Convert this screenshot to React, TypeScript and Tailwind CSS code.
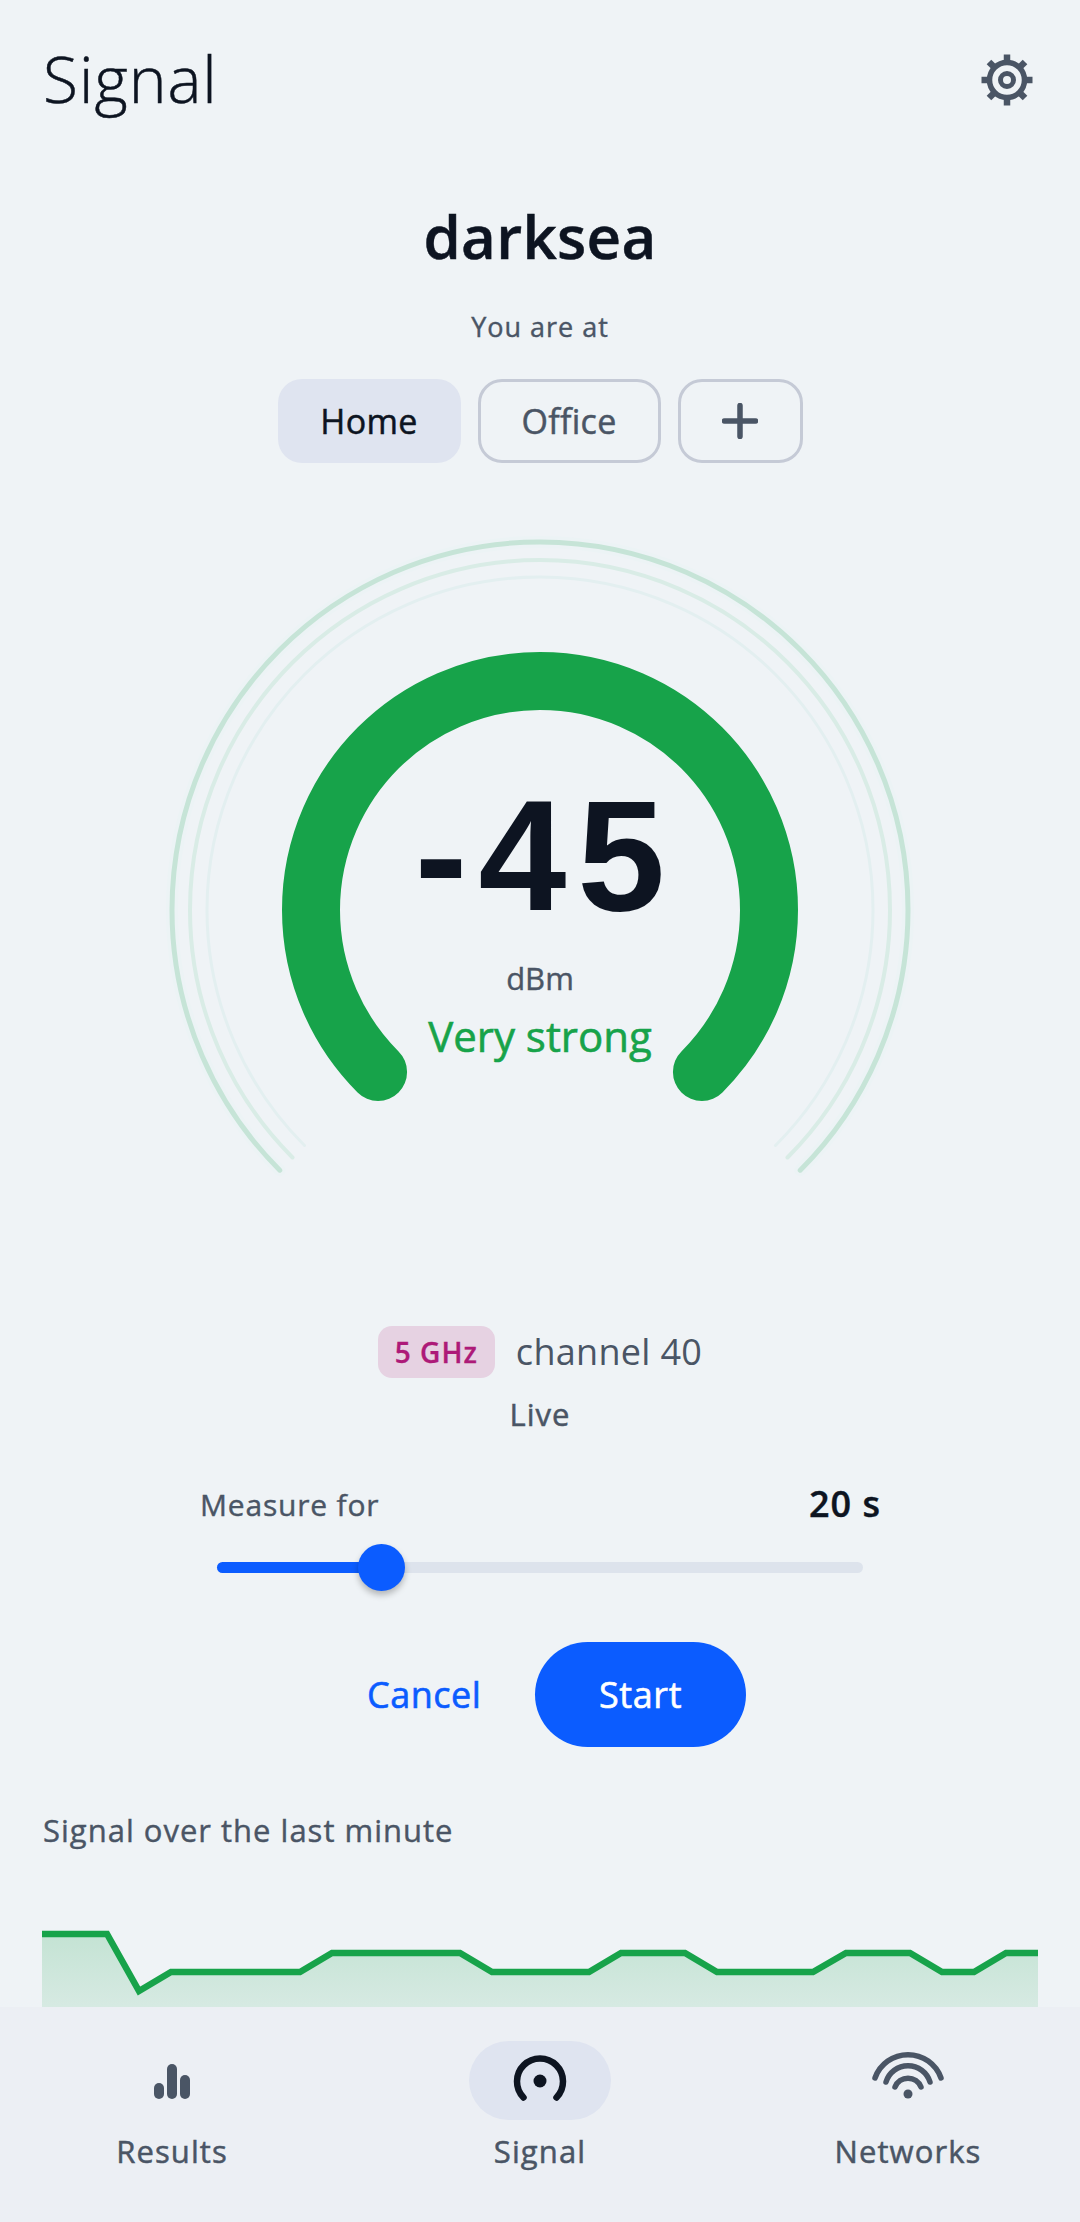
import React from "react";

const font = { fontFamily: '"Open Sans", "Noto Sans", sans-serif' };

function arc(cx: number, cy: number, r: number) {
  const d = r * Math.SQRT1_2;
  return `M ${cx - d} ${cy + d} A ${r} ${r} 0 1 1 ${cx + d} ${cy + d}`;
}

function Gear() {
  const teeth = [0, 45, 90, 135, 180, 225, 270, 315];
  return (
    <svg width="52" height="52" viewBox="0 0 52 52" fill="none" stroke="#4a5565">
      <circle cx="26" cy="26" r="17.5" strokeWidth="5.5" />
      <circle cx="26" cy="26" r="6.5" strokeWidth="5" />
      {teeth.map((a) => (
        <line key={a} x1="26" y1="7" x2="26" y2="0.5" strokeWidth="6.5" transform={`rotate(${a} 26 26)`} />
      ))}
    </svg>
  );
}

function Gauge() {
  const c = 400;
  return (
    <svg width="800" height="700" viewBox="0 0 800 700" fill="none" strokeLinecap="round" className="absolute top-0 left-[140px]">
      <path d={arc(c, 390, 368)} stroke="#ecf3f5" strokeWidth="12" />
      <path d={arc(c, 390, 368)} stroke="#c6e4d7" strokeWidth="5" />
      <path d={arc(c, 390, 350)} stroke="#d9ece6" strokeWidth="4" />
      <path d={arc(c, 390, 333)} stroke="#e3eff0" strokeWidth="3" />
      <path d={arc(c, 390, 229)} stroke="#17a34a" strokeWidth="58" />
    </svg>
  );
}

function Chart() {
  const pts = "42,1934 107,1934 139,1991 171,1972 300,1972 332,1953 460,1953 492,1972 589,1972 621,1953 685,1953 717,1972 813,1972 846,1953 910,1953 942,1972 974,1972 1006,1953 1038,1953";
  return (
    <svg width="1080" height="140" viewBox="0 1900 1080 140" fill="none" className="block">
      <defs>
        <linearGradient id="fill" x1="0" y1="1934" x2="0" y2="2010" gradientUnits="userSpaceOnUse">
          <stop offset="0" stopColor="#17a34a" stopOpacity="0.2" />
          <stop offset="1" stopColor="#17a34a" stopOpacity="0.11" />
        </linearGradient>
      </defs>
      <polygon points={`${pts} 1038,2040 42,2040`} fill="url(#fill)" />
      <polyline points={pts} stroke="#17a34a" strokeWidth="6.5" strokeLinejoin="miter" />
    </svg>
  );
}

function NavItem({ label, active, children }: { label: string; active?: boolean; children: React.ReactNode }) {
  return (
    <div className="flex flex-col items-center">
      <div className={`w-[142px] h-[79px] rounded-full flex items-center justify-center ${active ? "bg-[#dfe4f0]" : ""}`}>{children}</div>
      <div className="mt-[13px] h-[36px] leading-[36px] text-[31px] tracking-[1.1px] [-webkit-text-stroke:0.5px] text-[#4a5565]">{label}</div>
    </div>
  );
}

export default function App() {
  return (
    <div style={font} className="w-[1080px] h-[2222px] bg-[#eff3f6] flex flex-col overflow-hidden">
      <main className="flex-1 min-h-0 overflow-hidden flex flex-col">
        <header className="h-[160px] shrink-0 flex items-center justify-between pl-[43px] pr-[47px]">
          <h1 className="text-[64px] leading-[78px] mb-[2px] font-light text-[#0d1421] tracking-[1px] [-webkit-text-stroke:0.5px]">Signal</h1>
          <Gear />
        </header>

        <div className="mt-[36px] h-[80px] leading-[80px] text-center text-[60px] font-semibold tracking-[0.3px] [-webkit-text-stroke:0.5px] text-[#0d1421]">darksea</div>
        <div className="mt-[31px] h-[40px] leading-[40px] text-center text-[27px] tracking-[1px] [-webkit-text-stroke:0.4px] text-[#4a5565]">You are at</div>

        <div className="mt-[32px] flex justify-center gap-[17px]">
          <div className="w-[183px] h-[84px] rounded-[24px] bg-[#dfe4f0] flex items-center justify-center text-[34px] tracking-[0.3px] [-webkit-text-stroke:0.5px] text-[#0d1421]">Home</div>
          <div className="w-[183px] h-[84px] rounded-[24px] border-[3px] border-[#c5cad6] flex items-center justify-center text-[34px] tracking-[0.3px] [-webkit-text-stroke:0.5px] text-[#4a5565]">Office</div>
          <div className="w-[125px] h-[84px] rounded-[24px] border-[3px] border-[#c5cad6] flex items-center justify-center">
            <svg width="36" height="36" viewBox="0 0 36 36" stroke="#4a5565" strokeWidth="5.5" strokeLinecap="round">
              <path d="M18 2.5V33.5M2.5 18H33.5" />
            </svg>
          </div>
        </div>

        <div className="mt-[57px] relative h-[700px] shrink-0 flex flex-col items-center">
          <Gauge />
          <div className="relative mt-[250px] pl-[11px] h-[170px] leading-[170px] text-[158px] font-bold tracking-[11px] text-[#0d1421]" style={{ fontFamily: '"Liberation Sans", sans-serif' }}>-45</div>
          <div className="relative mt-[18px] h-[40px] leading-[40px] text-[31px] [-webkit-text-stroke:0.4px] text-[#4a5565]">dBm</div>
          <div className="relative mt-[10px] h-[56px] leading-[56px] text-[42px] [-webkit-text-stroke:0.6px] text-[#17a34a]">Very strong</div>
        </div>

        <div className="mt-[106px] flex justify-center items-center gap-[21px] h-[52px] shrink-0">
          <div className="w-[117px] h-[52px] rounded-[14px] bg-[#e6d2e2] flex items-center justify-center text-[28px] font-semibold tracking-[1px] [-webkit-text-stroke:0.3px] text-[#ad1a78]">5 GHz</div>
          <div className="text-[36px] tracking-[0.3px] text-[#4a5565]">channel 40</div>
        </div>
        <div className="mt-[16px] h-[40px] leading-[40px] text-center text-[31px] tracking-[1px] [-webkit-text-stroke:0.5px] text-[#4a5565]">Live</div>

        <div className="mt-[48px] pl-[200px] pr-[199px] h-[44px] flex items-center justify-between shrink-0">
          <span className="text-[30px] tracking-[0.8px] [-webkit-text-stroke:0.4px] text-[#4a5565]">Measure for</span>
          <span className="text-[36px] font-semibold tracking-[1px] [-webkit-text-stroke:0.4px] text-[#0d1421]">20 s</span>
        </div>

        <div className="mt-[36px] mx-[217px] relative h-[11px] rounded-full bg-[#dde3ec] shrink-0">
          <div className="h-full w-[164px] rounded-full bg-[#0b5cff]" />
          <div className="absolute left-[141px] top-[-18px] w-[47px] h-[47px] rounded-full bg-[#0b5cff] shadow-[0_4px_6px_rgba(0,0,0,0.25)]" />
        </div>

        <div className="mt-[69px] pl-[367px] flex items-center gap-[56px] h-[105px] shrink-0">
          <span className="w-[112px] text-[36px] tracking-[0.5px] [-webkit-text-stroke:0.6px] text-[#0b5cff]">Cancel</span>
          <div className="w-[211px] h-[105px] rounded-full bg-[#0b5cff] flex items-center justify-center text-[36px] tracking-[0.6px] [-webkit-text-stroke:0.6px] text-white">Start</div>
        </div>

        <div className="mt-[61px] pl-[43px] h-[44px] leading-[44px] text-[31px] tracking-[1px] [-webkit-text-stroke:0.4px] text-[#4a5565] shrink-0">Signal over the last minute</div>

        <div className="mt-[48px] shrink-0">
          <Chart />
        </div>
      </main>

      <nav className="h-[215px] shrink-0 bg-[#eceff4] grid grid-cols-3 gap-[24px] pt-[34px]">
        <NavItem label="Results">
          <svg width="40" height="40" viewBox="0 0 40 40" fill="#4a5565" className="mt-[3px]">
            <rect x="2" y="21" width="10" height="16" rx="5" />
            <rect x="15" y="2" width="10" height="35" rx="5" />
            <rect x="28" y="13" width="10" height="24" rx="5" />
          </svg>
        </NavItem>
        <NavItem label="Signal" active>
          <svg width="60" height="60" viewBox="0 0 60 60" fill="none" stroke="#0d1421" strokeLinecap="round">
            <path d="M 13.5 46.5 A 23 23 0 1 1 46.5 46.5" strokeWidth="6.5" />
            <circle cx="30" cy="30" r="6.5" fill="#0d1421" stroke="none" />
          </svg>
        </NavItem>
        <NavItem label="Networks">
          <svg width="76" height="50" viewBox="869 2050 76 50" fill="none" stroke="#4a5565" strokeWidth="5.5" strokeLinecap="round" className="mb-[13px]">
            <path d="M874 2079 A35 35 0 0 1 940 2079" />
            <path d="M885 2083 A23 23 0 0 1 929 2083" />
            <path d="M894 2088 A14 14 0 0 1 920 2088" />
            <circle cx="907" cy="2095" r="4.5" fill="#4a5565" stroke="none" />
          </svg>
        </NavItem>
      </nav>
    </div>
  );
}
